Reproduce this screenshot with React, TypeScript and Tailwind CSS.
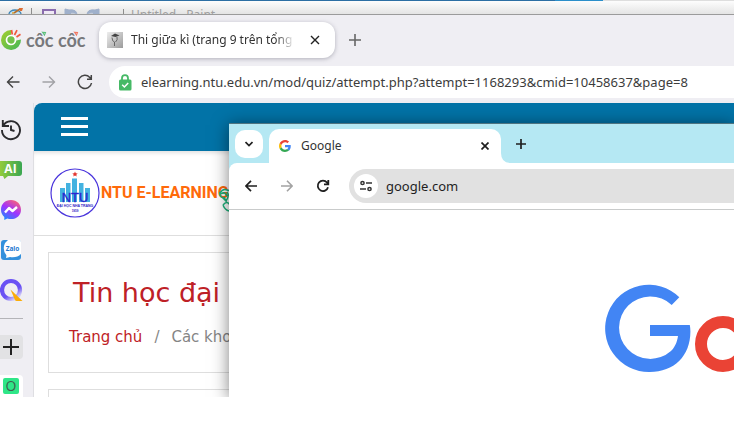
import type { ReactNode } from "react";

const UI_FONT = "font-['Noto_Sans','Segoe_UI',sans-serif]";
const ICON_STROKE = { fill: "none", stroke: "currentColor" } as const;

function IconButton({ label, className = "", children }: { label: string; className?: string; children: ReactNode }) {
  return (
    <button type="button" aria-label={label} className={`flex shrink-0 items-center justify-center ${className}`}>
      {children}
    </button>
  );
}

function PaintStrip() {
  return (
    <div className="h-[15px] overflow-hidden border-b border-[#9b9b9b] bg-linear-to-b from-white to-[#e4e4e4]">
      <div className="flex h-px">
        <div className="w-[555px] bg-[#2c6fa4]" />
        <div className="w-12 bg-[#2b8fca]" />
        <div className="flex-1 bg-[#dedede]" />
      </div>
      <div className="flex items-start pt-1.5 pl-2">
        <svg width="117" height="14" viewBox="8 7 117 14" className="shrink-0">
          <ellipse cx="15" cy="14" rx="6" ry="4" fill="#bfe0f2" stroke="#3e84b5" strokeWidth="1.3" />
          <circle cx="13" cy="13" r="1" fill="#e0a22e" />
          <path d="M14 13 L20 9" stroke="#b86f2a" strokeWidth="1.6" />
          <path d="M19 8h4l-1 3h-2z" fill="#dd6d32" />
          <path d="M31.5 8v8" stroke="#8d8d8d" />
          <path d="M43 16V10h12V16" fill="#efe9f5" stroke="#8a6cae" strokeWidth="2" />
          <path d="M65 9v7h8l-3-3q5-1 7 2q0-6-8-5z" fill="#9fb0cb" stroke="#9fb0cb" />
          <path d="M99 9v7h-8l3-3q-5-1-7 2q0-6 8-5z" fill="#9fb0cb" stroke="#9fb0cb" />
          <path d="M123.500 9v7" stroke="#8d8d8d" />
        </svg>
        <span className={`${UI_FONT} pl-1.5 text-xs leading-4 text-[#a0a0a0]`}>Untitled - Paint</span>
      </div>
    </div>
  );
}

function CocCocLogo() {
  return (
    <svg width="88" height="26" viewBox="0 0 88 26" role="img" aria-label="Cốc Cốc" className="shrink-0">
      <defs>
        <linearGradient id="coc" x1="0" y1="0" x2="1" y2="1">
          <stop offset="0" stopColor="#a6cf2e" />
          <stop offset="1" stopColor="#41b658" />
        </linearGradient>
      </defs>
      <path d="M11 3A10 10 0 1 0 21 12.500L16 13.500L11 9z" fill="url(#coc)" />
      <circle cx="11" cy="13" r="4.500" fill="#72c24a" stroke="#fff" strokeWidth="1.700" />
      <path d="M12.300 7.500L11.500 3M14.500 8l2.500-4.800M16.500 10l4-2.800" stroke="#f05a3c" strokeWidth="1.700" />
      <text x="26" y="20" fontFamily="Lato, sans-serif" fontSize="18" fontWeight="700" fill="#77787b">côc</text>
      <text x="58" y="20" fontFamily="Lato, sans-serif" fontSize="18" fontWeight="700" fill="#77787b">côc</text>
      <path d="M42.500 5.200l3 .3-1 2.500z" fill="none" stroke="#5cc07c" strokeWidth="1.100" />
      <path d="M74.500 5.200l3 .3-1 2.500z" fill="none" stroke="#f27862" strokeWidth="1.100" />
    </svg>
  );
}

function BrowserTabs() {
  return (
    <div className="flex h-[51px] items-start pt-[7px]">
      <div className="w-[99px] shrink-0 pt-[5px]">
        <CocCocLogo />
      </div>
      <div className="flex h-9 w-[236px] shrink-0 items-center rounded-xl bg-white px-2 shadow-[0_1px_4px_rgba(60,60,80,0.35)]">
        <svg width="16" height="16" viewBox="0 0 16 16" className="shrink-0">
          <defs>
            <linearGradient id="fav" x1="0" y1="0" x2="1" y2="1">
              <stop offset="0" stopColor="#eeeeee" />
              <stop offset="1" stopColor="#9b9b9b" />
            </linearGradient>
          </defs>
          <rect width="16" height="16" fill="url(#fav)" />
          <path d="M4 4l4-2.500L12.500 3.500 8.500 5z" fill="#444" />
          <path d="M5 5.500q0 4 2.500 4.500v4M10 5q1 3-1.500 5" fill="none" stroke="#666" />
        </svg>
        <span className={`${UI_FONT} ml-2 w-[166px] overflow-hidden mask-r-from-88% text-xs leading-5 whitespace-nowrap text-[#333]`}>
          Thi giữa kì (trang 9 trên tổng
        </span>
        <IconButton label="Close tab" className="ml-2 size-6 text-[#222]">
          <svg width="10" height="10" viewBox="0 0 10 10" {...ICON_STROKE} strokeWidth="1.4">
            <path d="M1 1l8 8M9 1L1 9" />
          </svg>
        </IconButton>
      </div>
      <IconButton label="New tab" className="mt-1.5 ml-2 size-6 text-[#666]">
        <svg width="12" height="12" viewBox="0 0 12 12" {...ICON_STROKE} strokeWidth="1.6">
          <path d="M6 0v12M0 6h12" />
        </svg>
      </IconButton>
    </div>
  );
}

function BrowserAddress() {
  return (
    <div className="flex h-8 items-center pl-[5px]">
      <IconButton label="Back" className="w-4 text-[#444]">
        <svg width="14" height="14" viewBox="0 0 14 14" {...ICON_STROKE} strokeWidth="1.4">
          <path d="M13.500 7H1M7 1.500L1.500 7 7 12.500" />
        </svg>
      </IconButton>
      <IconButton label="Forward" className="ml-5 w-4 text-[#a2a2a6]">
        <svg width="14" height="14" viewBox="0 0 14 14" {...ICON_STROKE} strokeWidth="1.4">
          <path d="M.5 7H13M7 1.500L12.500 7 7 12.500" />
        </svg>
      </IconButton>
      <IconButton label="Reload" className="ml-5 w-4 text-[#444]">
        <svg width="16" height="16" viewBox="0 0 16 16" {...ICON_STROKE} strokeWidth="1.5">
          <path d="M14.500 9A6.600 6.600 0 1 1 12.800 3.400L14 4.600M14.300 1V5.200H10" />
        </svg>
      </IconButton>
      <div className="ml-4 flex h-8 min-w-0 flex-1 items-center rounded-l-full bg-white pl-[9px]">
        <svg width="14" height="17" viewBox="0 0 14 17" className="shrink-0">
          <path d="M4 7V4.200a3 3 0 0 1 6 0V7" fill="none" stroke="#46b966" strokeWidth="1.800" />
          <rect x="1" y="5.500" width="12.500" height="11" rx="1.500" fill="#46b966" />
          <path d="M4.200 10.800l2.200 2.200 3.800-4" fill="none" stroke="#fff" strokeWidth="1.500" />
        </svg>
        <input
          aria-label="Address"
          defaultValue="elearning.ntu.edu.vn/mod/quiz/attempt.php?attempt=1168293&cmid=10458637&page=8"
          className={`${UI_FONT} ml-[9px] min-w-0 flex-1 bg-transparent text-[13px] leading-5 text-[#3c3c3c] outline-none`}
        />
      </div>
    </div>
  );
}

function Sidebar() {
  return (
    <nav aria-label="Sidebar" className="flex w-[34px] shrink-0 flex-col items-start border-r border-[#dedee2]">
      <div className="flex flex-col gap-4 pt-[15px]">
        <IconButton label="History" className="h-6 w-[22px]">
          <svg width="22" height="22" viewBox="0 0 22 22" fill="none" stroke="#2b2b2e" strokeWidth="1.900" className="shrink-0">
            <path d="M3.300 6.500A9 9 0 1 1 2 11M2.800 1v6H9M11 6.500V11l3.500 1" />
          </svg>
        </IconButton>
        <IconButton label="AI" className="h-6 w-[22px]">
          <svg width="22" height="22" viewBox="0 0 22 22" className="shrink-0">
            <defs>
              <linearGradient id="ai">
                <stop offset="0" stopColor="#91cb3c" />
                <stop offset="1" stopColor="#3aa652" />
              </linearGradient>
            </defs>
            <path d="M0 2h19q3 0 3 3v9q0 3-3 3H8l-3.500 3L3 17H0z" fill="url(#ai)" />
            <text x="10.500" y="14" textAnchor="middle" fontFamily="Open Sans, sans-serif" fontWeight="700" fontSize="12" fill="#fff">AI</text>
          </svg>
        </IconButton>
        <IconButton label="Messenger" className="h-6 w-[22px]">
          <svg width="22" height="22" viewBox="0 0 22 22" className="shrink-0">
            <defs>
              <linearGradient id="msg" x1=".2" y1="1" x2=".8" y2="0">
                <stop offset="0" stopColor="#188bff" />
                <stop offset=".5" stopColor="#a033ff" />
                <stop offset="1" stopColor="#ff6470" />
              </linearGradient>
            </defs>
            <path d="M11 1C5 1 1 5.200 1 10.700c0 3 1.300 5.500 3.300 7.200V21l3-1.400c1.200.4 2.400.5 3.700.5 6 0 10-4.100 10-9.400S17 1 11 1z" fill="url(#msg)" />
            <path d="M5 13.500l4-4.500 3.500 3L17 8" fill="none" stroke="#fff" strokeWidth="2.400" strokeLinejoin="round" />
          </svg>
        </IconButton>
        <IconButton label="Zalo" className="h-6 w-[22px]">
          <svg width="22" height="22" viewBox="0 0 22 22" className="shrink-0">
            <rect x="1" y="1" width="20" height="20" rx="3" fill="#3390dc" />
            <path d="M8 1h11q2 0 2 2v12q-4 4-11 3l-4 1 .5-2.500Q3 13 4 7q1-4 4-6z" fill="#fff" />
            <text x="12.500" y="12" textAnchor="middle" fontFamily="Open Sans, sans-serif" fontWeight="700" fontSize="6.500" fill="#2479d1">Zalo</text>
          </svg>
        </IconButton>
        <IconButton label="Search assistant" className="h-6 w-[22px]">
          <svg width="22" height="24" viewBox="0 0 22 24" className="shrink-0 overflow-visible">
            <defs>
              <linearGradient id="qa" x1="0" y1="0" x2=".7" y2="1">
                <stop offset=".7" stopColor="#6a52f4" />
                <stop offset="1" stopColor="#cfc9f8" />
              </linearGradient>
            </defs>
            <circle cx="11" cy="12" r="9" fill="none" stroke="url(#qa)" strokeWidth="4.200" />
            <path d="M10.500 11.500l12 11.500h-6q-1 0-1.500-1z" fill="#fbac08" />
          </svg>
        </IconButton>
      </div>
      <div className="mt-4 h-px w-[23px] bg-[#b4b4b8]" />
      <IconButton label="Add shortcut" className="mt-4 h-6 w-[23px] rounded-r bg-[#e2e2e4] text-[#222]">
        <svg width="17" height="16" viewBox="0 0 17 16" {...ICON_STROKE} strokeWidth="2">
          <path d="M8 0v16M0 8h16" />
        </svg>
      </IconButton>
      <IconButton label="O" className="mt-4 h-[22px] w-[23px] rounded-tr bg-white pr-px">
        <span className="flex size-4 items-center justify-center rounded-xs bg-[#2fe688] font-['Open_Sans',sans-serif] text-sm leading-4 text-[#40614f]">
          O
        </span>
      </IconButton>
    </nav>
  );
}

function NtuLogo() {
  return (
    <svg width="50" height="50" viewBox="0 0 50 50" role="img" aria-label="NTU" className="shrink-0">
      <circle cx="25" cy="25" r="24" fill="#fff" stroke="#4a35dc" strokeWidth="1.200" />
      <path d="M10 20h5v14h-5zM16 15h4.500v19H16zM22 10.500h5V34h-5zM29 15h4.500v19H29zM35 20h5v14h-5z" fill="#43b2e0" />
      <path d="M25 3.500l.8 1.700 1.900.2-1.400 1.300.4 1.900-1.700-1-1.700 1 .4-1.900-1.400-1.300 1.900-.2z" fill="#e2362e" />
      <text x="25" y="34" textAnchor="middle" fontFamily="Liberation Sans, sans-serif" fontSize="13" stroke="#2c25cf" strokeWidth=".3" fill="#2c25cf">NTU</text>
      <text x="25" y="39" textAnchor="middle" fontFamily="Liberation Sans, sans-serif" fontSize="3.500" fontWeight="700" fill="#3026c4">ĐẠI HỌC NHA TRANG</text>
      <text x="25" y="44" textAnchor="middle" fontFamily="Liberation Sans, sans-serif" fontSize="3" fontWeight="700" fill="#3026c4">1959</text>
    </svg>
  );
}

function CoursePage() {
  return (
    <main className="min-w-0 flex-1 overflow-hidden rounded-tl-lg bg-white font-['DejaVu_Sans',Verdana,sans-serif]">
      <header>
        <div className="flex h-12 items-center bg-[#0273a7] pl-[27px]">
          <IconButton label="Menu" className="text-white">
            <svg width="27" height="20" viewBox="0 0 27 20" fill="currentColor">
              <path d="M0 0h27v3H0zM0 8h27v3H0zM0 16h27v3H0z" />
            </svg>
          </IconButton>
        </div>
        <div className="flex h-[85px] items-center border-b border-[#dedede] pl-4 shadow-[inset_0_4px_4px_-2px_rgba(0,0,0,0.12)]">
          <NtuLogo />
          <span className="ml-px w-[124px] font-[Roboto,sans-serif] text-base leading-6 font-bold whitespace-nowrap text-[#ff6a0a]">
            NTU E-LEARNING
          </span>
          <svg width="24" height="28" viewBox="0 0 24 28" fill="none" stroke="#1db47c" strokeWidth="1.500" className="-ml-1.5 mt-3 shrink-0">
            <path d="M1 8q3-5 7-3t5-3M1 7q-1 4 3 6l3 3q4-6 1-9M2 9q4-3 6 2M5 12l3 6M4 20q4-5 7 0M4 20q2 5 6 6" />
          </svg>
        </div>
      </header>
      <section className="mx-3.5 mt-4 h-[121px] border border-[#dedede] pt-5">
        <h1 className="pl-6 text-[27px] leading-10 whitespace-nowrap text-[#be2126]">Tin học đại</h1>
        <nav aria-label="Breadcrumb" className="mt-3 flex pl-5 text-[15px] leading-6 whitespace-nowrap text-[#858585]">
          <a href="#home" className="text-[#be2126]">Trang chủ</a>
          <span className="px-3">/</span>
          <span>Các kho</span>
        </nav>
      </section>
      <section className="mx-3.5 mt-4 h-2 border border-b-0 border-[#dedede]" />
    </main>
  );
}

function GoogleMark() {
  return (
    <svg width="12" height="12" viewBox="0 0 24 24" className="shrink-0">
      <path d="M23.500 12.300c0-.9-.1-1.500-.2-2.200H12v4.500h6.600c-.1 1.100-.9 2.800-2.500 3.900l3.700 2.900c2.300-2.100 3.700-5.200 3.700-9.100z" fill="#4285f4" />
      <path d="M12 24c3.200 0 6-1.100 7.900-2.900l-3.800-2.900c-1 .7-2.400 1.200-4.100 1.200-3.200 0-5.800-2.100-6.800-5l-3.900 3C3.300 21.300 7.300 24 12 24z" fill="#34a853" />
      <path d="M5.200 14.400c-.2-.8-.4-1.600-.4-2.400s.1-1.600.4-2.400L1.300 6.600C.5 8.200 0 10 0 12s.5 3.800 1.300 5.400z" fill="#fbbc05" />
      <path d="M12 4.700c2.300 0 3.800 1 4.700 1.800l3.400-3.300C18 1.200 15.200 0 12 0 7.300 0 3.300 2.700 1.300 6.600l3.900 3c1-2.900 3.600-4.900 6.800-4.900z" fill="#ea4335" />
    </svg>
  );
}

function ChromeWindow() {
  return (
    <div className="absolute top-[108px] right-0 bottom-0 left-[229px] flex flex-col overflow-hidden border-t border-[#4f7480] bg-[#b5e8f3]">
      <div className="flex h-[39px] shrink-0 items-center">
        <IconButton label="Search tabs" className="ml-1.5 size-7 rounded-[10px] bg-white text-[#1f1f1f]">
          <svg width="8" height="6" viewBox="0 0 8 6" {...ICON_STROKE} strokeWidth="1.700">
            <path d="M.5 1L4 4.500 7.500 1" />
          </svg>
        </IconButton>
        <div className="ml-1.5 flex h-[34px] w-[232px] shrink-0 items-center self-end rounded-t-[10px] bg-white px-2.5">
          <GoogleMark />
          <span className={`${UI_FONT} ml-2.5 flex-1 text-xs leading-4 text-[#333]`}>Google</span>
          <IconButton label="Close Google tab" className="w-3 text-[#1f1f1f]">
            <svg width="8" height="8" viewBox="0 0 8 8" {...ICON_STROKE} strokeWidth="1.700">
              <path d="M.5.5l7 7M7.500.5l-7 7" />
            </svg>
          </IconButton>
        </div>
        <svg width="10" height="10" viewBox="0 0 10 10" className="shrink-0 self-end">
          <path d="M0 0q0 10 10 10H0z" fill="#fff" />
        </svg>
        <IconButton label="New Google tab" className="size-5 text-[#1f1f1f]">
          <svg width="10" height="10" viewBox="0 0 10 10" {...ICON_STROKE} strokeWidth="1.700">
            <path d="M5 0v10M0 5h10" />
          </svg>
        </IconButton>
      </div>
      <div className="flex h-[47px] shrink-0 items-center rounded-tl-lg border-b border-[#c9cbcb] bg-white pl-4">
        <IconButton label="Go back" className="w-3 text-[#1f1f1f]">
          <svg width="12" height="12" viewBox="0 0 12 12" {...ICON_STROKE} strokeWidth="1.700">
            <path d="M12 6H1.200M6 .8L.9 6 6 11.200" />
          </svg>
        </IconButton>
        <IconButton label="Go forward" className="ml-6 w-3 text-[#a3a3a3]">
          <svg width="12" height="12" viewBox="0 0 12 12" {...ICON_STROKE} strokeWidth="1.600">
            <path d="M0 6h10.800M6 .8L11.100 6 6 11.200" />
          </svg>
        </IconButton>
        <IconButton label="Reload page" className="ml-6 w-3 text-[#1f1f1f]">
          <svg width="14" height="14" viewBox="0 0 14 14" {...ICON_STROKE} strokeWidth="1.800" className="shrink-0">
            <path d="M12 8.200A5.200 5.200 0 1 1 11 3.500L12.500 5.200M12.300 1v4.400H8" />
          </svg>
        </IconButton>
        <div className="ml-5 flex h-[34px] min-w-0 flex-1 items-center rounded-l-full bg-[#e1e1e1] pl-[5px]">
          <IconButton label="Site information" className="size-6 rounded-full bg-white text-[#333]">
            <svg width="12" height="12" viewBox="0 0 12 12" {...ICON_STROKE} strokeWidth="1.500">
              <circle cx="2.500" cy="3" r="1.600" />
              <circle cx="9.500" cy="9" r="1.600" />
              <path d="M6 3h6M0 9h6" />
            </svg>
          </IconButton>
          <input
            aria-label="Google address"
            defaultValue="google.com"
            className={`${UI_FONT} ml-2 min-w-0 flex-1 bg-transparent text-[13px] leading-5 text-[#1f1f1f] outline-none`}
          />
        </div>
      </div>
      <div className="flex-1 overflow-hidden bg-white pt-[70px] pl-[372px]">
        <svg width="200" height="100" viewBox="601 280 200 100" role="img" aria-label="Google" fill="none">
          <path
            d="M679.300 297.300A43.600 43.600 0 1 0 649.800 372C674 372 690.400 356 690.400 331.500Q690.400 328 689.800 325H650V336H678C677 343 674.500 347.500 671 351A31.200 31.200 0 1 1 671.700 305Z"
            fill="#4285f4"
          />
          <circle cx="723" cy="344" r="22" stroke="#ea4335" strokeWidth="12" />
        </svg>
      </div>
    </div>
  );
}

export default function App() {
  return (
    <div className="min-h-screen overflow-hidden bg-white">
      <PaintStrip />
      <div className="relative overflow-hidden bg-[#efeef3]">
        <BrowserTabs />
        <BrowserAddress />
        <div className="mt-[5px] flex">
          <Sidebar />
          <CoursePage />
        </div>
        <div className="pointer-events-none absolute top-[108px] right-0 bottom-0 left-[229px] shadow-[0_2px_16px_rgba(0,0,0,0.5)]" />
        <ChromeWindow />
      </div>
    </div>
  );
}
